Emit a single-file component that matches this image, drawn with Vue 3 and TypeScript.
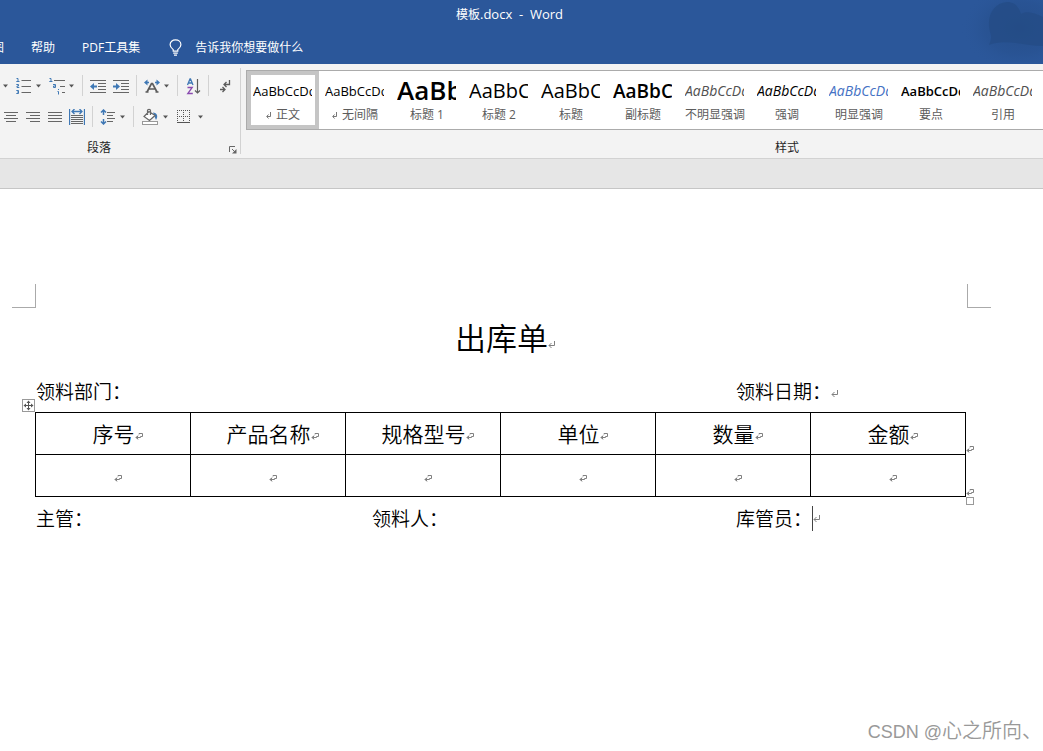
<script setup lang="ts">
import { ref } from 'vue'

interface StyleItem {
  name: string
  sample: string
  kind: string
  marked?: boolean
}

const styles: StyleItem[] = [
  { name: '正文', sample: 'AaBbCcDd', kind: 'body', marked: true },
  { name: '无间隔', sample: 'AaBbCcDd', kind: 'body', marked: true },
  { name: '标题 1', sample: 'AaBb', kind: 'h1' },
  { name: '标题 2', sample: 'AaBbC', kind: 'h2' },
  { name: '标题', sample: 'AaBbC', kind: 'h2' },
  { name: '副标题', sample: 'AaBbC', kind: 'sub' },
  { name: '不明显强调', sample: 'AaBbCcDd', kind: 'subtle' },
  { name: '强调', sample: 'AaBbCcDd', kind: 'em' },
  { name: '明显强调', sample: 'AaBbCcDd', kind: 'intense' },
  { name: '要点', sample: 'AaBbCcDd', kind: 'strong' },
  { name: '引用', sample: 'AaBbCcDd', kind: 'quote' },
]

const selected = ref(0)
const query = ref('')
const columns: string[] = ['序号', '产品名称', '规格型号', '单位', '数量', '金额']
</script>

<template>
  <div class="app">
    <header class="top">
      <svg class="cloud" width="84" height="62" viewBox="0 0 84 62" aria-hidden="true">
        <defs>
          <radialGradient id="haze" cx="0.72" cy="0.45" r="0.7">
            <stop offset="0" stop-color="#254c86" stop-opacity="0.8" />
            <stop offset="0.6" stop-color="#264f8c" stop-opacity="0.45" />
            <stop offset="1" stop-color="#2b579a" stop-opacity="0" />
          </radialGradient>
        </defs>
        <rect width="84" height="62" fill="url(#haze)" />
        <path d="M30 45C32 40 33 37 31 32C27 17 34 3 48 2C57 2 60 8 62 14C69 10 77 14 84 17V46C66 46 45 38 30 45Z" fill="#244b84" fill-opacity="0.7" />
      </svg>
      <div class="title">模板<span class="latin">.docx&nbsp; -&nbsp; Word</span></div>
      <nav class="tabs">
        <button class="tab cut">视图</button>
        <button class="tab">帮助</button>
        <button class="tab">PDF工具集</button>
        <label class="tell">
          <svg width="13" height="17" viewBox="0 0 13 17" fill="none" stroke="#fff" stroke-width="1.2" aria-hidden="true">
            <path d="M4.2 12.2V10.6C2.4 9.2 1.1 7.8 1.1 5.7C1.1 2.8 3.4 .9 6.5 .9S11.9 2.8 11.9 5.7C11.9 7.8 10.6 9.2 8.8 10.6V12.2ZM4.2 14.1H8.8M5 16.1H8" />
          </svg>
          <input v-model="query" type="text" placeholder="告诉我你想要做什么" aria-label="告诉我你想要做什么" />
        </label>
      </nav>
    </header>

    <section class="ribbon">
      <div class="group para">
        <div class="tools">
          <div class="row">
            <button class="tool" aria-label="项目符号"><svg class="caret" viewBox="0 0 7 4"><path d="M1 .5h5L3.5 3.5z" /></svg></button>
            <button class="tool" aria-label="编号">
              <svg width="16" height="18" viewBox="0 0 16 18" fill="none">
                <path d="M5.5 3.5H15M5.5 9.5H15M5.5 15.5H15" stroke="#666" />
                <path d="M.5 1.5H2V4.5M.3 4.5H3.5M.3 7.5H2.5V9H1V10.5H3.3M.3 13.5H2.5V16.5H.3M1 15H2.5" stroke="#3f78b5" />
              </svg>
              <svg class="caret" viewBox="0 0 7 4"><path d="M1 .5h5L3.5 3.5z" /></svg>
            </button>
            <button class="tool" aria-label="多级列表">
              <svg width="16" height="18" viewBox="0 0 16 18" fill="none">
                <path d="M5 3.5H16M11 9.5H16M13 15.5H16" stroke="#666" />
                <path d="M.5 1.5H2V4.5M.3 4.5H3.5M4 7.5H6.5V10.5H4.5V9H6.5M9.5 12V13M8.5 14.5H9.5V17.5" stroke="#3f78b5" />
              </svg>
              <svg class="caret" viewBox="0 0 7 4"><path d="M1 .5h5L3.5 3.5z" /></svg>
            </button>
            <i class="sep"></i>
            <button class="tool" aria-label="减少缩进量">
              <svg width="16" height="16" viewBox="0 0 16 16" fill="none">
                <path d="M0 2.5H16M8 5.5H16M8 8.5H16M8 11.5H16M0 14.5H16" stroke="#666" />
                <path d="M7 8.5H2" stroke="#3f78b5" stroke-width="2" /><path d="M0 8.5L4 5V12z" fill="#3f78b5" />
              </svg>
            </button>
            <button class="tool" aria-label="增加缩进量">
              <svg width="16" height="16" viewBox="0 0 16 16" fill="none">
                <path d="M0 2.5H16M8 5.5H16M8 8.5H16M8 11.5H16M0 14.5H16" stroke="#666" />
                <path d="M0 8.5H5" stroke="#3f78b5" stroke-width="2" /><path d="M7 8.5L3 5V12z" fill="#3f78b5" />
              </svg>
            </button>
            <i class="sep"></i>
            <button class="tool" aria-label="中文版式">
              <svg width="16" height="16" viewBox="0 0 16 16" fill="none">
                <path d="M3 14L7.5 5.5H8.5L13 14M4.5 11H11.5M1.5 14H4.5M11.5 14H14.5" stroke="#5c5c5c" stroke-width="1.7" />
                <path d="M0 4.5L3.5 1.5V7.5zM16 4.5L12.5 1.5V7.5z" fill="#3f78b5" /><path d="M2 4.5H5M11 4.5H14" stroke="#3f78b5" stroke-width="1.6" />
              </svg>
              <svg class="caret" viewBox="0 0 7 4"><path d="M1 .5h5L3.5 3.5z" /></svg>
            </button>
            <i class="sep"></i>
            <button class="tool" aria-label="排序">
              <svg width="16" height="18" viewBox="0 0 16 18" fill="none">
                <path d="M2.5 8L5 2H5.5L8 8M3.5 6H7" stroke="#3f78b5" stroke-width="1.3" />
                <path d="M2.5 10.5H7.2L2.8 16.5H7.8" stroke="#8a4bb0" stroke-width="1.3" />
                <path d="M12.5 2V16M10 13.5L12.5 16L15 13.5" stroke="#5c5c5c" stroke-width="1.2" />
              </svg>
            </button>
            <i class="sep"></i>
            <button class="tool" aria-label="显示编辑标记">
              <svg width="16" height="16" viewBox="0 0 16 16" fill="none" stroke="#5c5c5c" stroke-width="1.3">
                <path d="M13.5 2V6.5H8M10.5 4L8 6.5L10.5 9M4 11.5H9M6.5 9L9 11.5L6.5 14" />
              </svg>
            </button>
          </div>

          <div class="row">
            <div class="aligns">
              <button class="tool" aria-label="居中">
                <svg width="16" height="16" viewBox="0 0 16 16"><path d="M1 3.5H15M3 6.5H13M1 9.5H15M3 12.5H13" stroke="#666" /></svg>
              </button>
              <button class="tool" aria-label="右对齐">
                <svg width="16" height="16" viewBox="0 0 16 16"><path d="M1 3.5H15M5 6.5H15M1 9.5H15M5 12.5H15" stroke="#666" /></svg>
              </button>
              <button class="tool" aria-label="两端对齐">
                <svg width="16" height="16" viewBox="0 0 16 16"><path d="M1 3.5H15M1 6.5H15M1 9.5H15M1 12.5H15" stroke="#666" /></svg>
              </button>
              <button class="tool" aria-label="分散对齐">
                <svg width="16" height="16" viewBox="0 0 16 16" fill="none">
                  <path d="M.5 0V16M15.5 0V16M3 2.5H13M5.5 0L3 2.5L5.5 5M10.5 0L13 2.5L10.5 5" stroke="#3f78b5" stroke-width="1.3" />
                  <path d="M2 6.5H14M2 8.5H14M2 10.5H14M2 12.5H14M2 14.5H14" stroke="#666" />
                </svg>
              </button>
            </div>
            <i class="sep"></i>
            <button class="tool" aria-label="行距">
              <svg width="16" height="16" viewBox="0 0 16 16" fill="none">
                <path d="M7 3.5H15M7 6.5H13M7 9.5H15M7 12.5H13" stroke="#666" />
                <path d="M3.5 1V6M1 3.5L3.5 1L6 3.5M3.5 10V15M1 12.5L3.5 15L6 12.5" stroke="#3f78b5" stroke-width="1.5" />
              </svg>
              <svg class="caret" viewBox="0 0 7 4"><path d="M1 .5h5L3.5 3.5z" /></svg>
            </button>
            <i class="sep"></i>
            <button class="tool" aria-label="底纹">
              <svg width="18" height="18" viewBox="0 0 18 18" fill="none">
                <path d="M12 4.5C16 5 17.5 8 15 12L13.5 8.5z" fill="#3f78b5" />
                <path d="M8 3.5L3 8.5L8.5 12.5L14 7.5zM6.5 7V2.5C6.5 1 9.5 1 9.5 2.5V7" fill="#fff" stroke="#666" stroke-width="1.2" />
                <rect x="1.5" y="13.5" width="15" height="3" fill="#fff" stroke="#999" />
              </svg>
              <svg class="caret" viewBox="0 0 7 4"><path d="M1 .5h5L3.5 3.5z" /></svg>
            </button>
            <button class="tool" aria-label="边框">
              <svg width="18" height="16" viewBox="0 0 18 16" fill="none">
                <path d="M1 1.5H14M1 7.5H14" stroke="#555" stroke-dasharray="1 1" />
                <path d="M1.5 1V13M7.5 1V13M13.5 1V13" stroke="#555" stroke-dasharray="1 1" />
                <path d="M1 13.5H14" stroke="#555" />
              </svg>
              <svg class="caret" viewBox="0 0 7 4"><path d="M1 .5h5L3.5 3.5z" /></svg>
            </button>
          </div>
        </div>
        <div class="foot">
          <span>段落</span>
          <button class="launcher" aria-label="段落设置">
            <svg width="8" height="8" viewBox="0 0 8 8" fill="none"><path d="M.5 6V.5H6M3 3L6 6" stroke="#666" /><path d="M7.5 3V7.5H3z" fill="#666" /></svg>
          </button>
        </div>
      </div>

      <div class="group gallery-group">
        <div class="gallery">
          <button
            v-for="(item, index) in styles"
            :key="item.name"
            class="style"
            :class="{ selected: selected === index }"
            @click="selected = index"
          >
            <span class="sample" :class="item.kind">{{ item.sample }}</span>
            <span class="name">
              <svg v-if="item.marked" width="6" height="7" viewBox="0 0 6 7" fill="none" stroke="#777"><path d="M4.5 0V4.5H1M2.5 2.5L.7 4.5L2.5 6.5" /></svg>
              {{ item.name }}
            </span>
          </button>
        </div>
        <div class="foot"><span>样式</span></div>
      </div>
    </section>

    <div class="ruler"></div>

    <main class="page">
      <div class="corners"><i class="corner left"></i><i class="corner right"></i></div>
      <h1>出库单<svg class="mark" viewBox="0 0 8 7"><path d="M6.5 0V4.5H1M3.5 2L1 4.5L3.5 7" /></svg></h1>
      <div class="fields">
        <span>领料部门：</span>
        <span></span>
        <span>领料日期：<svg class="mark" viewBox="0 0 8 7"><path d="M6.5 0V4.5H1M3.5 2L1 4.5L3.5 7" /></svg></span>
      </div>
      <div class="sheet">
        <svg class="handle" width="13" height="13" viewBox="0 0 13 13" fill="none" aria-hidden="true">
          <rect x=".5" y=".5" width="12" height="12" fill="#fff" stroke="#999" />
          <path d="M6.5 2V11M2 6.5H11" stroke="#555" />
          <path d="M6.5 1.5L8.5 4H4.5zM6.5 11.5L8.5 9H4.5zM1.5 6.5L4 4.5V8.5zM11.5 6.5L9 4.5V8.5z" fill="#555" />
        </svg>
        <table>
          <thead>
            <tr>
              <th v-for="name in columns" :key="name" scope="col">{{ name }}<svg class="mark" viewBox="0 0 8 7"><path d="M4 1.5V.5H7.5V3.5H5.5V4.5H1M3 2.5L1 4.5L3 6.5M2.5 3V6" /></svg></th>
            </tr>
          </thead>
          <tbody>
            <tr>
              <td v-for="name in columns" :key="name"><svg class="mark" viewBox="0 0 8 7"><path d="M4 1.5V.5H7.5V3.5H5.5V4.5H1M3 2.5L1 4.5L3 6.5M2.5 3V6" /></svg></td>
            </tr>
          </tbody>
        </table>
        <div class="row-ends" aria-hidden="true">
          <svg class="mark" viewBox="0 0 8 7"><path d="M4 1.5V.5H7.5V3.5H5.5V4.5H1M3 2.5L1 4.5L3 6.5M2.5 3V6" /></svg>
          <svg class="mark" viewBox="0 0 8 7"><path d="M4 1.5V.5H7.5V3.5H5.5V4.5H1M3 2.5L1 4.5L3 6.5M2.5 3V6" /></svg>
        </div>
        <i class="resize"></i>
      </div>
      <div class="fields">
        <span>主管：</span>
        <span>领料人：</span>
        <span class="active">库管员：<i class="cursor"></i><svg class="mark" viewBox="0 0 8 7"><path d="M6.5 0V4.5H1M3.5 2L1 4.5L3.5 7" /></svg></span>
      </div>
      <div class="credit"><span class="latin-credit">CSDN @</span>心之所向、</div>
    </main>
  </div>
</template>

<style>
html,
body {
  background: #fff;
}
</style>

<style scoped>
.app {
  min-height: 100vh;
  display: flex;
  flex-direction: column;
  overflow: hidden;
  font-family: "Open Sans", "Noto Sans CJK SC", sans-serif;
  font-size: 12px;
  color: #262626;
}
.app svg {
  flex: none;
}
button {
  border: 0;
  padding: 0;
  margin: 0;
  background: none;
  font: inherit;
  color: inherit;
}
.top {
  position: relative;
  background: #2b579a;
  color: #fff;
}
.cloud {
  position: absolute;
  right: 0;
  top: 0;
}
.title {
  height: 28px;
  line-height: 28px;
  padding-right: 24px;
  text-align: center;
}
.latin {
  font-size: 13px;
}
.tabs {
  display: flex;
  align-items: center;
  gap: 27px;
  height: 34px;
  padding-top: 2px;
}
.tab {
  white-space: nowrap;
}
.cut {
  margin-left: -20px;
}
.tell {
  display: flex;
  align-items: center;
  gap: 13px;
  margin-left: 2px;
}
.tell input {
  width: 160px;
  border: 0;
  padding: 0;
  background: none;
  color: #fff;
  font: inherit;
  outline: 0;
}
.tell input::placeholder {
  color: #fff;
  opacity: 1;
}
.ribbon {
  display: flex;
  height: 94px;
  background: #f3f3f3;
  border-bottom: 1px solid #d2d2d2;
}
.group {
  display: flex;
  flex-direction: column;
}
.para {
  position: relative;
  flex: none;
  width: 240px;
  margin: 4px 0;
  border-right: 1px solid #d2d2d2;
}
.tools {
  padding: 7px 0 2px;
}
.row {
  display: flex;
  align-items: center;
  gap: 7px;
  height: 21px;
  padding-left: 2px;
  margin-bottom: 10px;
}
.aligns {
  display: flex;
  gap: 6px;
  padding-left: 1px;
}
.tool {
  display: flex;
  align-items: center;
  gap: 3px;
}
.caret {
  width: 7px;
  height: 4px;
  fill: #555;
}
.sep {
  width: 1px;
  height: 21px;
  background: #d2d2d2;
}
.foot {
  display: flex;
  justify-content: center;
  height: 18px;
  line-height: 18px;
}
.para .foot {
  padding-right: 42px;
}
.launcher {
  position: absolute;
  right: 3px;
  bottom: 0;
  display: flex;
}
.gallery-group {
  flex: 1;
  min-width: 0;
  padding-top: 6px;
}
.gallery {
  display: flex;
  height: 58px;
  margin-left: 5px;
  margin-bottom: 9px;
  border: 1px solid #ababab;
  border-right: 0;
  background: #fff;
  overflow: hidden;
}
.style {
  box-sizing: border-box;
  flex: none;
  display: flex;
  flex-direction: column;
  justify-content: flex-start;
  width: 72px;
  height: 58px;
  padding: 2px 2px 0;
  border: 4px solid transparent;
}
.selected {
  border-color: #c5c5c5;
}
.sample {
  flex: none;
  width: 59px;
  height: 28px;
  line-height: 28px;
  overflow: hidden;
  text-align: left;
  white-space: nowrap;
  font-size: 13px;
  color: #000;
}
.h1 {
  font-size: 26px;
  font-weight: 600;
  line-height: 26px;
}
.h2 {
  font-size: 20px;
}
.sub {
  font-size: 19px;
  font-weight: 600;
}
.subtle,
.em,
.intense,
.quote {
  font-size: 14px;
  font-style: italic;
}
.subtle,
.quote {
  color: #505050;
}
.intense {
  color: #4472c4;
}
.strong {
  font-weight: 600;
}
.name {
  flex: none;
  display: flex;
  align-items: center;
  align-self: center;
  gap: 4px;
  height: 20px;
  line-height: 20px;
  white-space: nowrap;
  color: #5c5c5c;
}
.gallery-group .foot {
  padding-left: 290px;
}
.ruler {
  height: 29px;
  background: #e6e6e6;
  border-bottom: 1px solid #c6c6c6;
}
.page {
  position: relative;
  flex: 1;
  padding: 95px 76px 0 36px;
  font-family: "Noto Sans CJK SC", sans-serif;
  font-weight: 350;
  color: #000;
}
.corners {
  display: flex;
  justify-content: space-between;
  margin: 0 -24px;
}
.corner {
  box-sizing: border-box;
  width: 24px;
  height: 24px;
  border-bottom: 1px solid #aaa;
}
.left {
  border-right: 1px solid #aaa;
}
.right {
  border-left: 1px solid #aaa;
}
.mark {
  width: 8px;
  height: 7px;
  margin-right: -8px;
  vertical-align: 2px;
  fill: none;
  stroke: #808080;
}
h1 {
  margin: 0;
  padding-bottom: 4px;
  text-align: center;
  font-size: 31px;
  line-height: 58px;
  font-weight: inherit;
}
.fields {
  display: grid;
  grid-template-columns: 336fr 364fr 231fr;
  font-size: 19px;
  line-height: 42px;
  height: 42px;
}
.sheet {
  position: relative;
  margin: 0 1px 0 -1px;
}
table {
  width: 100%;
  table-layout: fixed;
  border-collapse: collapse;
}
th,
td {
  box-sizing: border-box;
  height: 42px;
  padding: 0 0 2px 1px;
  border: 1px solid #000;
  text-align: center;
  font-size: 21px;
  line-height: 38px;
  font-weight: inherit;
}
.handle {
  position: absolute;
  left: -13px;
  top: -13px;
}
.row-ends {
  position: absolute;
  left: 100%;
  top: 0;
  height: 84px;
  display: flex;
  flex-direction: column;
  justify-content: space-between;
  padding-top: 34px;
  box-sizing: border-box;
}
.resize {
  position: absolute;
  left: 100%;
  top: 100%;
  width: 6px;
  height: 6px;
  border: 1px solid #999;
}
.active {
  display: flex;
  align-items: center;
}
.cursor {
  width: 1px;
  height: 25px;
  background: #444;
}
.credit {
  position: absolute;
  right: 1px;
  bottom: 4px;
  font-size: 20px;
  line-height: 30px;
  color: #999;
}
.latin-credit {
  font-family: "Liberation Sans", sans-serif;
  font-size: 18px;
}
</style>
